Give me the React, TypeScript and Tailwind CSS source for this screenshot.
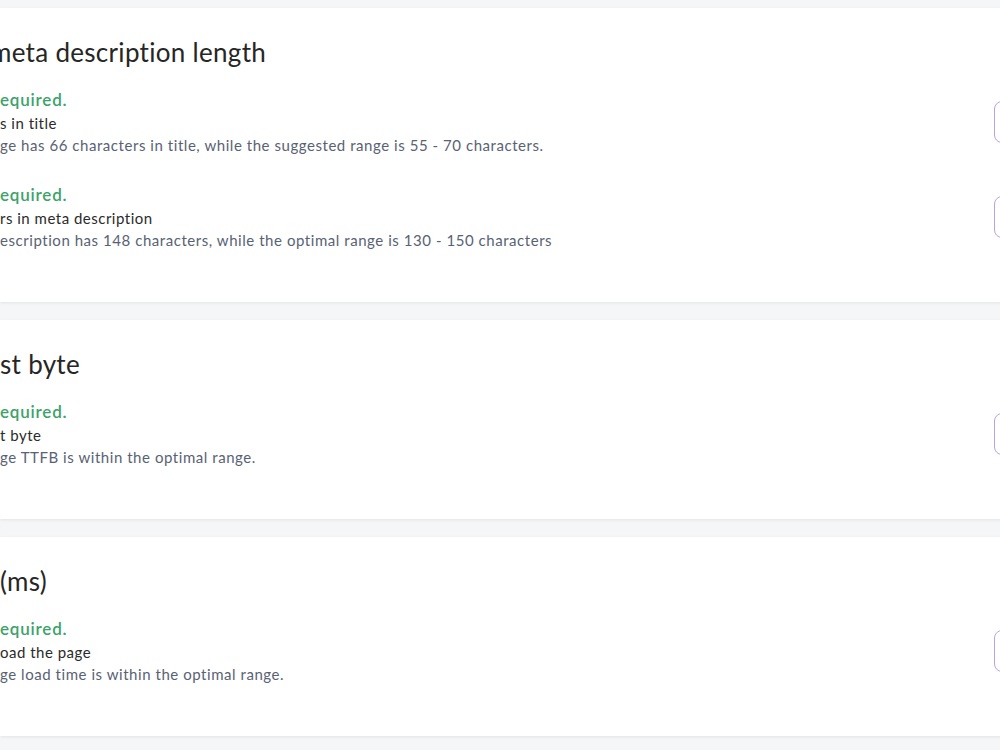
import React from "react";

type Item = {
  label: [string, string];
  desc: [string, string];
};

type Card = {
  title: [string, string];
  items: Item[];
};

const cards: Card[] = [
  {
    title: ["Title and ", "meta description length"],
    items: [
      {
        label: ["Character", "s in title"],
        desc: ["The pa", "ge has 66 characters in title, while the suggested range is 55 - 70 characters."],
      },
      {
        label: ["Characte", "rs in meta description"],
        desc: ["The meta d", "escription has 148 characters, while the optimal range is 130 - 150 characters"],
      },
    ],
  },
  {
    title: ["Time to fir", "st byte"],
    items: [
      {
        label: ["Time to firs", "t byte"],
        desc: ["The pa", "ge TTFB is within the optimal range."],
      },
    ],
  },
  {
    title: ["Page load time ", "(ms)"],
    items: [
      {
        label: ["Time to l", "oad the page"],
        desc: ["The pa", "ge load time is within the optimal range."],
      },
    ],
  },
];

function Clipped({ parts }: { parts: [string, string] }) {
  return (
    <div className="flex whitespace-nowrap">
      <span className="flex w-0 justify-end">
        <span>{parts[0]}</span>
      </span>
      <span>{parts[1]}</span>
    </div>
  );
}

export default function App() {
  return (
    <div
      className="h-[750px] w-[1000px] overflow-hidden bg-[#f5f6f8] pt-2"
      style={{ fontFamily: "Lato, 'Noto Sans', sans-serif" }}
    >
      <div className="flex flex-col gap-[18px]">
        {cards.map((card, ci) => (
          <div
            key={ci}
            className="w-[1100px] bg-white pb-[52px] pt-[28px] shadow-[0_1px_3px_rgba(0,0,0,0.08)]"
          >
            <div className={`text-[26px] leading-[32px] text-[#262626] tracking-[0.3px] ${ci === 0 ? "-ml-[10px]" : ""}`}>
              <Clipped parts={card.title} />
            </div>
            <div className="mt-5 flex flex-col gap-[28px]">
              {card.items.map((it, ii) => (
                <div key={ii} className="flex items-center">
                  <div className="flex w-[994px] flex-col">
                    <div className="text-[17px] font-semibold leading-[23px] tracking-[0.8px] text-[#3ba36a]">
                      <Clipped parts={["No action r", "equired."]} />
                    </div>
                    <div className="text-[15px] leading-[24px] tracking-[0.5px] text-[#2b2b2b]">
                      <Clipped parts={it.label} />
                    </div>
                    <div className="text-[15px] leading-[20px] tracking-[0.55px] text-[#596274]">
                      <Clipped parts={it.desc} />
                    </div>
                  </div>
                  <div className="h-[42px] w-[100px] rounded-lg border-[1.5px] border-[#b8a4e2] bg-white" />
                </div>
              ))}
            </div>
          </div>
        ))}
      </div>
    </div>
  );
}
